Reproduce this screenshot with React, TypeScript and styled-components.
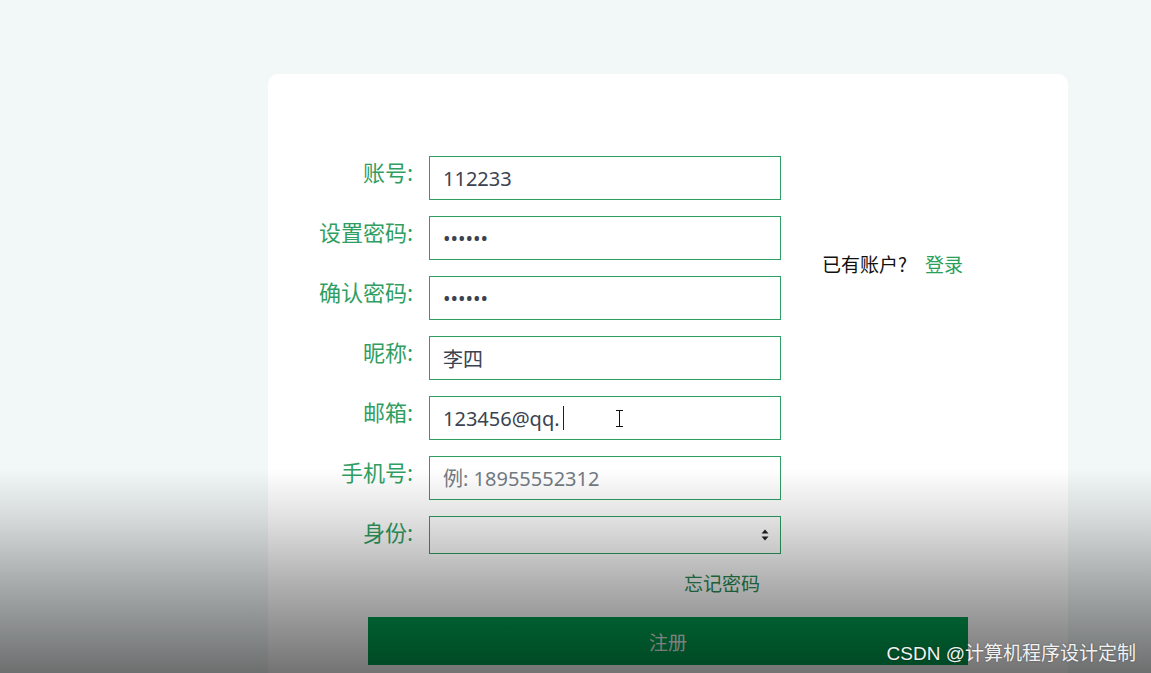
import styled, { createGlobalStyle } from 'styled-components';

const GREEN = '#2f9e62';
const TEXT = '#3b4350';

const GlobalStyle = createGlobalStyle`
  html, body {
    margin: 0;
    padding: 0;
    height: 100%;
    overflow: hidden;
    background: #f2f7f7;
    font-family: "Noto Sans", "Noto Sans CJK SC", sans-serif;
  }
`;

const Page = styled.div`
  position: relative;
  height: 673px;
  padding-top: 74px;
  box-sizing: border-box;
  overflow: hidden;
`;

const Card = styled.div`
  margin-left: 268px;
  width: 800px;
  height: 700px;
  background: #fff;
  border-radius: 10px;
  padding: 82px 0 0 40px;
  box-sizing: border-box;
`;

const Top = styled.div`
  display: flex;
  align-items: flex-start;
`;

const Form = styled.div`
  display: grid;
  grid-template-columns: 105px 352px;
  column-gap: 16px;
  row-gap: 16px;
`;

const Label = styled.label`
  text-align: right;
  color: ${GREEN};
  font-size: 22px;
  line-height: 31px;
  white-space: nowrap;
  font-family: "Noto Sans CJK SC", sans-serif;
`;

const Field = styled.div`
  position: relative;
`;

const Input = styled.input`
  width: 100%;
  height: 44px;
  box-sizing: border-box;
  border: 1px solid ${GREEN};
  border-radius: 0;
  padding: 0 13px;
  font-size: 20px;
  color: ${TEXT};
  background: #fff;
  outline: none;
  font-family: "Noto Sans", "Noto Sans CJK SC", sans-serif;

  &::placeholder {
    color: #747b84;
  }
`;

const Select = styled.select`
  width: 100%;
  height: 38px;
  box-sizing: border-box;
  border: 1px solid ${GREEN};
  border-radius: 0;
  background: #fff;
  appearance: none;
  outline: none;
`;

const SelectArrow = styled.svg`
  position: absolute;
  right: 12px;
  top: 13px;
  pointer-events: none;
`;

const Caret = styled.span`
  position: absolute;
  left: 134px;
  top: 10px;
  width: 1px;
  height: 24px;
  background: #222;
`;

const MouseBeam = styled.svg`
  position: absolute;
  left: 186px;
  top: 14px;
`;

const Aside = styled.div`
  margin: 94px 0 0 41px;
  font-size: 19px;
  color: #111;
  font-family: "Noto Sans CJK SC", sans-serif;
  white-space: nowrap;
`;

const LoginLink = styled.a`
  color: #27a05a;
  margin-left: 18px;
  text-decoration: none;
`;

const Forgot = styled.div`
  width: 473px;
  margin-top: 16px;
  text-align: right;
  padding-right: 21px;
  box-sizing: border-box;
  color: #2a8a52;
  font-size: 19px;
  line-height: 26px;
  font-family: "Noto Sans CJK SC", sans-serif;
`;

const SubmitButton = styled.button`
  display: block;
  width: 600px;
  height: 48px;
  margin: 21px 0 0 60px;
  border: none;
  background: #009c4e;
  color: #e8eee9;
  font-size: 19px;
  font-family: "Noto Sans CJK SC", sans-serif;
`;

const Shade = styled.div`
  position: absolute;
  left: 0;
  right: 0;
  bottom: 0;
  height: 205px;
  pointer-events: none;
  background: linear-gradient(
    to bottom,
    rgba(0, 0, 0, 0) 0%,
    rgba(0, 0, 0, 0.12) 25%,
    rgba(0, 0, 0, 0.3) 55%,
    rgba(0, 0, 0, 0.55) 100%
  );
`;

const Watermark = styled.div`
  position: absolute;
  right: 15px;
  bottom: 8px;
  color: #f2f2f2;
  font-size: 19px;
  font-family: "Liberation Sans", "Noto Sans CJK SC", sans-serif;
  text-shadow: 0 0 2px rgba(0, 0, 0, 0.4);
`;

const rows = [
  { label: '账号:', type: 'text', value: '112233' },
  { label: '设置密码:', type: 'password', value: '123456' },
  { label: '确认密码:', type: 'password', value: '123456' },
  { label: '昵称:', type: 'text', value: '李四' },
  { label: '邮箱:', type: 'text', value: '123456@qq.', caret: true },
  { label: '手机号:', type: 'text', value: '', placeholder: '例: 18955552312' },
];

export default function App() {
  return (
    <Page>
      <GlobalStyle />
      <Card>
        <Top>
          <Form>
            {rows.map((r) => (
              <>
                <Label key={r.label + 'l'}>{r.label}</Label>
                <Field key={r.label + 'f'}>
                  <Input type={r.type} defaultValue={r.value} placeholder={r.placeholder} readOnly />
                  {r.caret && (
                    <>
                      <Caret />
                      <MouseBeam width="9" height="17" viewBox="0 0 9 17">
                        <path d="M1 0.5h7M1 16.5h7M4.5 0.5v16" stroke="#111" strokeWidth="1" fill="none" />
                      </MouseBeam>
                    </>
                  )}
                </Field>
              </>
            ))}
            <Label>身份:</Label>
            <Field>
              <Select defaultValue="">
                <option value=""></option>
                <option value="student">学生</option>
                <option value="teacher">教师</option>
              </Select>
              <SelectArrow width="8" height="12" viewBox="0 0 8 12">
                <path d="M4 0.5L7.5 4.5H0.5Z M4 11.5L7.5 7.5H0.5Z" fill="#222" />
              </SelectArrow>
            </Field>
          </Form>
          <Aside>
            已有账户?
            <LoginLink href="#">登录</LoginLink>
          </Aside>
        </Top>
        <Forgot>忘记密码</Forgot>
        <SubmitButton>注册</SubmitButton>
      </Card>
      <Shade />
      <Watermark>CSDN @计算机程序设计定制</Watermark>
    </Page>
  );
}
